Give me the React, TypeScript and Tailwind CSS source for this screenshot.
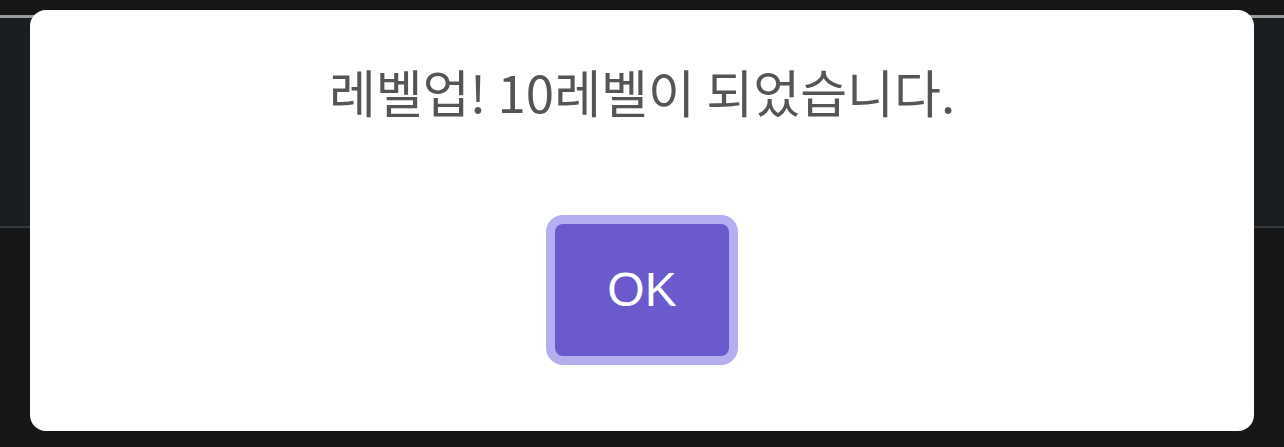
export default function App() {
  return (
    <div className="relative h-[447px] w-[1284px] overflow-hidden bg-[#161719]">
      {/* page behind the dialog */}
      <div className="flex h-full flex-col">
        <div className="h-[15px] bg-[#151618]" />
        <div className="h-[3px] bg-[#9b9b9b]" />
        <div className="h-[208px] bg-[#1b1e21]" />
        <div className="h-[2px] bg-[#38393b]" />
        <div className="flex-1 bg-[#161719]" />
      </div>

      {/* level-up dialog */}
      <div className="absolute inset-0 flex items-start justify-center px-[30px] pt-[10px]">
        <div className="flex h-[421px] w-full flex-col items-center rounded-2xl bg-white">
          <p className="mt-[55px] text-[51px] leading-[52px] text-[#555555] [font-family:'Noto_Sans_CJK_KR','Liberation_Sans',sans-serif]">
            레벨업! 10레벨이 되었습니다.
          </p>
          <button className="mt-[107px] flex h-[132px] w-[174px] items-center justify-center rounded-lg bg-[#6a5acd] text-[48px] text-white ring-[9px] ring-[#b5aef0] [font-family:'Liberation_Sans',sans-serif]">
            OK
          </button>
        </div>
      </div>
    </div>
  );
}
